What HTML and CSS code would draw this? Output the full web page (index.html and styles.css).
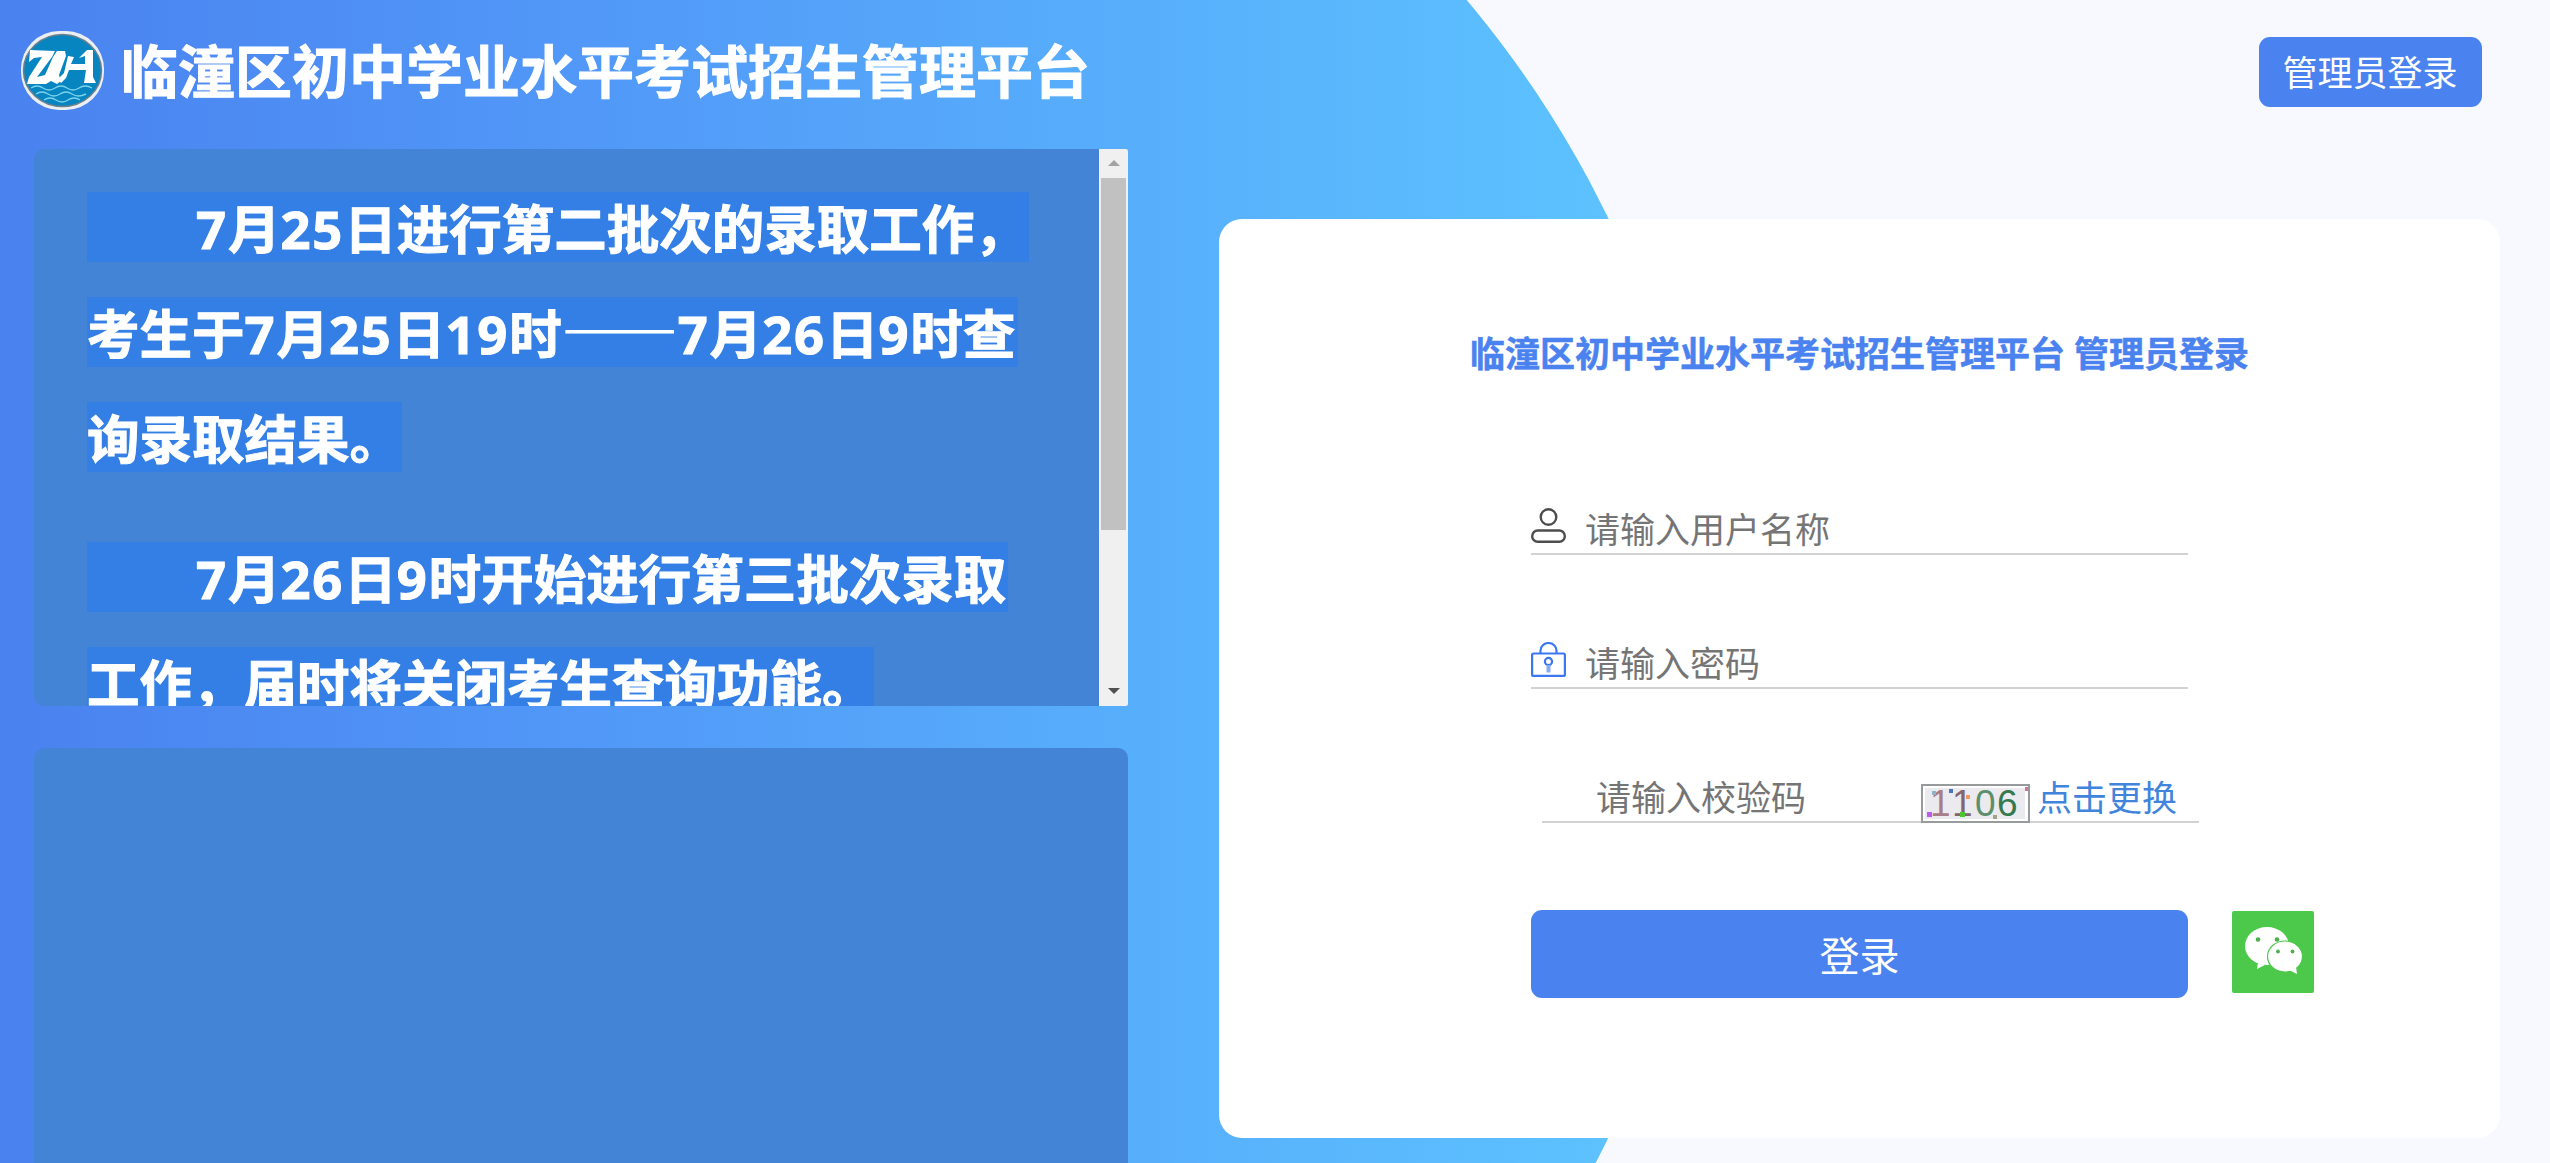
FILE: index.html
```html
<!DOCTYPE html>
<html lang="zh-CN">
<head>
    <meta charset="UTF-8">
    <meta name="viewport" content="width=device-width, initial-scale=1.0">
    <title>临潼区初中学业水平考试招生管理平台</title>
    <link rel="stylesheet" href="styles.css">
</head>

<body>
    <div class="page">
        <div class="bg-circle"></div>
        <div class="header">
            <div class="brand">
                <svg class="logo" viewBox="0 0 83 79">
                    <rect x="0" y="0" width="83" height="79" rx="38" fill="#eceff2"/>
                    <ellipse cx="41.5" cy="39.5" rx="39" ry="36" fill="#0785c0" stroke="#6b7f8c" stroke-width="1.5"/>
                    <g fill="#fff">
                        <path d="M9 19L34 20L31 26L16 46L24 44L32 26L36 20H44L45 25L38 44L40 50L36 53L30 50L25 53H6L8 46L21 26L13 27L8 31Z"/>
                        <path d="M47 25L53 26L50 33H64V25L58 27L66 19H72V46L75 52H63L65 39H48L45 47L40 52L37 48L43 42Z"/>
                    </g>
                    <path d="M10 57q6 -4 12 0t12 0t12 0t12 0t13 0M15 63q6 -4 12 0t12 0t12 0t14 0M23 69q6 -4 12 0t12 0t12 0" fill="none" stroke="#7cd2ea" stroke-width="1.4"/>
                </svg>
                <h1 class="brand-title">临潼区初中学业水平考试招生管理平台</h1>
            </div>
            <button class="admin-btn">管理员登录</button>
        </div>

        <div class="main">
            <div class="left">
                <div class="panel notice">
                    <div class="notice-text">
                        <p>
                            <span class="line l1"><i></i><b>7</b>月<b>25</b>日进行第二批次的录取工作，</span><br>
                            <span class="line l2">考生于<b>7</b>月<b>25</b>日<b>19</b>时<em>——</em><b>7</b>月<b>26</b>日<b>9</b>时查</span><br>
                            <span class="line l3">询录取结果。</span>
                        </p>
                        <p>
                            <span class="line l4"><i></i><b>7</b>月<b>26</b>日<b>9</b>时开始进行第三批次录取</span><br>
                            <span class="line l5">工作，届时将关闭考生查询功能。</span>
                        </p>
                    </div>
                    <div class="scrollbar">
                        <div class="arrow up"></div>
                        <div class="thumb"></div>
                        <div class="arrow down"></div>
                    </div>
                </div>
                <div class="panel second"></div>
            </div>

            <div class="card">
                <h2 class="card-title">临潼区初中学业水平考试招生管理平台 管理员登录</h2>
                <div class="form">
                    <div class="field">
                        <svg class="icon" viewBox="0 0 35 35" fill="none" stroke="#4d4d4d" stroke-width="2.4">
                            <circle cx="17.5" cy="9" r="7.8"/>
                            <rect x="1.2" y="22.5" width="32.6" height="11.3" rx="5.5"/>
                        </svg>
                        <input type="text" placeholder="请输入用户名称">
                    </div>
                    <div class="field">
                        <svg class="icon" viewBox="0 0 35 35" fill="none" stroke="#3b78f0" stroke-width="2.2">
                            <path d="M9.5 11V8.5a8 7.5 0 0 1 16 0V11"/>
                            <rect x="1.1" y="11.5" width="32.8" height="22.4" rx="1.5"/>
                            <circle cx="17.5" cy="19.5" r="3.6"/>
                            <path d="M17.5 23v7.5" stroke="#87abf6" stroke-width="4"/>
                        </svg>
                        <input type="text" placeholder="请输入密码">
                    </div>
                    <div class="field code">
                        <input type="text" placeholder="请输入校验码">
                        <svg class="captcha" viewBox="0 0 109 39">
                            <rect x="1" y="1" width="107" height="37" fill="#fff" stroke="#979b9b" stroke-width="2"/>
                            <rect x="4" y="4" width="100" height="31" fill="#ebeaee"/>
                            <g font-family="Liberation Sans" font-size="37">
                                <text x="9" y="32" fill="#a87d87">1</text>
                                <text x="31" y="32" fill="#84656f">1</text>
                                <text x="54" y="32" fill="#5c8f6b">0</text>
                                <text x="76" y="32" fill="#35794d">6</text>
                            </g>
                            <rect x="6" y="28" width="5" height="5" fill="#b95bf0"/>
                            <rect x="39" y="28" width="5" height="5" fill="#4cc72f"/>
                            <rect x="11" y="7" width="4" height="4" fill="#8fb5c4"/>
                            <rect x="28" y="5" width="4" height="4" fill="#4b75c0"/>
                            <rect x="45" y="11" width="4" height="4" fill="#f1985a"/>
                            <rect x="72" y="31" width="4" height="4" fill="#a4a188"/>
                            <rect x="104" y="3" width="3" height="4" fill="#d8748a"/>
                        </svg>
                        <a class="change">点击更换</a>
                    </div>
                    <div class="actions">
                        <button class="login-btn">登录</button>
                        <svg class="wechat" viewBox="0 0 82 82">
                            <rect width="82" height="82" rx="2" fill="#4cc84b"/>
                            <path d="M26 51L25 58L33 54Z" fill="#fff"/>
                            <ellipse cx="35" cy="35" rx="22" ry="19" fill="#fff"/>
                            <ellipse cx="53" cy="45.5" rx="17.5" ry="15.5" fill="#fff" stroke="#4cc84b" stroke-width="1.2"/>
                            <path d="M57 59L65 63L64 56Z" fill="#fff"/>
                            <g fill="#4cb04b">
                                <circle cx="26" cy="28.5" r="2.3"/>
                                <circle cx="45" cy="28.5" r="2.3"/>
                                <circle cx="46" cy="40.5" r="1.9"/>
                                <circle cx="60.5" cy="40.5" r="1.9"/>
                            </g>
                        </svg>
                    </div>
                </div>
            </div>
        </div>
    </div>
</body>
</html>
```
FILE: styles.css
```css
* {
    box-sizing: border-box;
}

body {
    margin: 0;
    background-color: #f8f9fe;
    font-family: "Open Sans", "Noto Sans CJK SC", sans-serif;
}

h1, h2, p {
    margin: 0;
}

button {
    border: none;
    padding: 0;
    background-color: #4a82ef;
    color: #fff;
    font-family: inherit;
    border-radius: 11px;
    cursor: pointer;
}

.page {
    position: relative;
    height: 1163px;
    overflow: hidden;
}

.bg-circle {
    position: absolute;
    left: -392px;
    top: -375px;
    width: 2106px;
    height: 2106px;
    border-radius: 50%;
    background: linear-gradient(to right, #4a82ef 0, #4a82ef 19%, #5198f8 46%, #5ec6ff 100%);
}

.header,
.main {
    position: relative;
}

.header {
    display: flex;
    justify-content: space-between;
    height: 149px;
    padding: 31px 68px 0 21px;
}

.brand {
    display: flex;
}

.logo {
    width: 83px;
    height: 79px;
}

.brand-title {
    margin-left: 17px;
    height: 80px;
    line-height: 80px;
    font-size: 57px;
    color: #fff;
    white-space: nowrap;
    -webkit-text-stroke: 1px #fff;
}

.admin-btn {
    width: 223px;
    height: 70px;
    margin-top: 6px;
    padding: 1px 1px 0 0;
    font-size: 35px;
    line-height: 69px;
}

.main {
    display: flex;
    align-items: flex-start;
    padding-left: 34px;
}

.left {
    width: 1094px;
}

.panel {
    background-color: #4484d6;
    border-radius: 10px;
}

.notice {
    display: flex;
    justify-content: space-between;
    height: 557px;
    overflow: hidden;
    border-radius: 10px 2px 2px 10px;
}

.second {
    height: 415px;
    margin-top: 42px;
    border-radius: 10px 10px 0 0;
}

.notice-text {
    padding: 19px 0 0 53px;
    font-size: 52.5px;
    font-weight: bold;
    line-height: 105px;
    color: #fff;
    white-space: nowrap;
    -webkit-text-stroke: 1px #fff;
}

.notice-text p {
    margin-bottom: 35px;
}

.line {
    display: inline-block;
    height: 70px;
    line-height: 73px;
    vertical-align: middle;
    background-color: #337fe5;
}

.line i {
    display: inline-block;
    width: 109px;
}

.line b {
    font-weight: bold;
    letter-spacing: 1.9px;
}

/* the two dashes join into one rule */
.line em {
    font-family: "Noto Sans CJK SC", sans-serif;
    font-style: normal;
    font-weight: 500;
    font-size: 58px;
    line-height: 0;
}

.l1 {
    width: 942px;
}

.l2 {
    width: 931px;
}

.l3 {
    width: 315px;
}

.l4 {
    width: 921px;
}

.l5 {
    width: 787px;
}

.scrollbar {
    display: flex;
    flex-direction: column;
    align-items: center;
    width: 29px;
    background-color: #f0f0f0;
}

.arrow {
    border: 6.5px solid transparent;
}

.up {
    margin-top: 5px;
    border-bottom-color: #a3a3a3;
}

.down {
    margin-top: auto;
    margin-bottom: 6px;
    border-top-color: #505050;
}

.thumb {
    width: 25px;
    height: 352px;
    margin-top: 12px;
    background-color: #c1c1c1;
}

.card {
    width: 1281px;
    height: 919px;
    margin: 70px 0 0 91px;
    background-color: #fff;
    border-radius: 23px;
}

.card-title {
    margin-top: 110px;
    line-height: 50px;
    font-size: 35px;
    text-align: center;
    color: #4a82ef;
    -webkit-text-stroke: 0.5px #4a82ef;
}

.form {
    width: 657px;
    margin: 108px 0 0 312px;
}

.field {
    display: flex;
    align-items: flex-start;
    height: 68px;
    margin-bottom: 66px;
    border-bottom: 2px solid #d2d2d2;
}

.icon {
    width: 35px;
    height: 35px;
    margin: 21px 19px 0 0;
}

.field input {
    flex: 1;
    min-width: 0;
    height: 50px;
    margin-top: 17px;
    padding: 0;
    border: none;
    outline: none;
    background: transparent;
    font-family: inherit;
    font-size: 35px;
}

.field input::placeholder {
    color: #757575;
}

.code {
    width: 657px;
    margin-left: 11px;
    padding-left: 54px;
}

.captcha {
    width: 109px;
    height: 39px;
    margin: 29px 7px 0 0;
}

.change {
    height: 50px;
    margin: 18px 22px 0 0;
    line-height: 50px;
    font-size: 35px;
    color: #4184dc;
}

.actions {
    display: flex;
    width: 783px;
    justify-content: space-between;
    margin-top: 87px;
}

.login-btn {
    width: 657px;
    height: 88px;
    font-size: 40px;
}

.wechat {
    width: 82px;
    height: 82px;
    margin-top: 1px;
}
```
